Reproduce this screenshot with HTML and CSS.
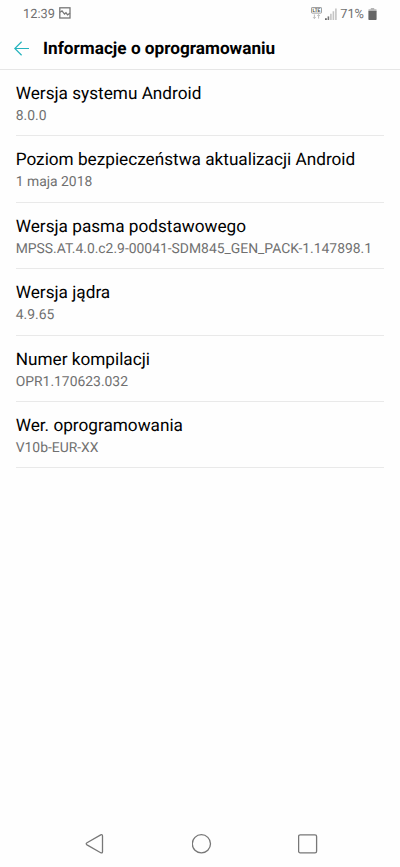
FILE: index.html
```html
<!DOCTYPE html>
<html lang="pl">
<head>
<meta charset="utf-8">
<meta name="viewport" content="width=device-width, initial-scale=1">
<title>Informacje o oprogramowaniu</title>
<link rel="stylesheet" href="styles.css">
</head>
<body>
<div class="screen">
  <div class="status">
    <span class="clock">12:39</span>
    <svg class="picture" width="12" height="12" viewBox="0 0 12 12" fill="none" stroke="#777" stroke-width="1.3"><rect x=".8" y=".8" width="10.2" height="10.2"/><path d="M1 5.2 3 3.9l2.5 3.2 1.5-1.4 1.5 2.1L11 6.2"/></svg>
    <div class="indicators">
      <svg class="lte" width="11" height="13" viewBox="0 0 11 13"><rect x=".5" y=".5" width="10" height="5.6" rx=".6" fill="#fff" stroke="#888" stroke-width=".8"/><text x="5.5" y="5.1" text-anchor="middle" textLength="8" lengthAdjust="spacingAndGlyphs">LTE</text><path d="M3.4 7.5v4M2.1 10.2l1.3 1.3 1.3-1.3M7.6 11.6v-4M6.3 8.9l1.3-1.3 1.3 1.3" fill="none" stroke="#b5b5b5" stroke-width=".9"/></svg>
      <svg class="signal" width="12" height="12" viewBox="0 0 12 12"><path d="M0 10.2h1.8V12H0z" fill="#666"/><path d="M2.6 8.4h1.6V12H2.6z" fill="#777"/><path d="M5.1 5.8h1.6V12H5.1zM7.6 3.2h1.6V12H7.6zM10.1.4h1.6V12h-1.6z" fill="#c4c4c4"/></svg>
      <span class="percent">71%</span>
      <svg class="battery" width="9" height="12" viewBox="0 0 9 12"><path d="M2.8 0h3.4v1.2H8q.6 0 .6.6v1.4H.4V1.8q0-.6.6-.6h1.8z" fill="#b5b5b5"/><path d="M.4 3h8.2v8.2q0 .7-.7.7H1.1q-.7 0-.7-.7z" fill="#666"/></svg>
    </div>
  </div>
  <header class="header">
    <svg class="back" width="16" height="16" viewBox="0 0 16 16" fill="none" stroke="#25b3bd" stroke-width="1.2"><path d="M7.6.8.8 7.5l6.8 6.7M.8 7.5H15"/></svg>
    <h1>Informacje o oprogramowaniu</h1>
  </header>
  <main class="list">
    <section class="row"><h2>Wersja systemu Android</h2><p>8.0.0</p></section>
    <section class="row"><h2>Poziom bezpieczeństwa aktualizacji Android</h2><p>1 maja 2018</p></section>
    <section class="row"><h2>Wersja pasma podstawowego</h2><p>MPSS.AT.4.0.c2.9-00041-SDM845_GEN_PACK-1.147898.1</p></section>
    <section class="row"><h2>Wersja jądra</h2><p>4.9.65</p></section>
    <section class="row"><h2>Numer kompilacji</h2><p>OPR1.170623.032</p></section>
    <section class="row"><h2>Wer. oprogramowania</h2><p>V10b-EUR-XX</p></section>
  </main>
  <nav class="nav">
    <svg width="20" height="20" viewBox="0 0 20 20"><path d="M2 8.7 15.7.9q1.8-.8 1.8 1v15.8q0 1.8-1.8 1L2 10.9q-1.6-1.1 0-2.2z"/></svg>
    <svg width="20" height="20" viewBox="0 0 20 20"><circle cx="9.4" cy="9.8" r="9.1"/></svg>
    <svg width="20" height="20" viewBox="0 0 20 20"><rect x=".6" y=".8" width="18" height="18" rx="1.6"/></svg>
  </nav>
</div>
</body>
</html>
```
FILE: styles.css
```css
* { box-sizing: border-box; }
body { margin: 0; background: #fefefe; font-family: Roboto, "Liberation Sans", sans-serif; color: #000; text-rendering: geometricPrecision; }
h1, h2, p { margin: 0; white-space: nowrap; }
svg { display: block; flex: none; }
.screen { width: 400px; height: 867px; display: flex; flex-direction: column; overflow: hidden; }
.status { height: 28px; padding: 0 23px; display: flex; align-items: center; font-size: 12.8px; line-height: 28px; color: #707070; }
.clock, .percent { padding-top: 1px; }
.picture { margin: 0 0 2px 4px; }
.indicators { margin-left: auto; display: flex; align-items: center; }
.lte { margin: 0 3px 1px 0; }
.lte text { font: bold 5px "Liberation Sans", sans-serif; fill: #444; }
.signal { margin: 0 3px 1px 0; }
.percent { margin-right: 4px; }
.battery { margin-bottom: 1px; }
.header { height: 42px; padding: 0 14px; border-bottom: 1px solid #e6e6e6; display: flex; align-items: center; }
.back { margin-right: 13px; }
h1 { font-size: 17.2px; line-height: 24px; font-weight: 700; }
.list { padding: 0 16px; }
.row { height: 66.4px; padding-top: 12px; border-bottom: 1px solid #e9e9e9; }
h2 { font-size: 17.2px; line-height: 24px; font-weight: 400; margin-left: -0.3px; }
p { font-size: 13.9px; line-height: 20px; color: #707070; margin-left: -0.3px; }
.nav { height: 47px; margin-top: auto; padding: 0 82px 0 85px; display: flex; align-items: center; justify-content: space-between; fill: none; stroke: #777; stroke-width: 1.3; }
```
